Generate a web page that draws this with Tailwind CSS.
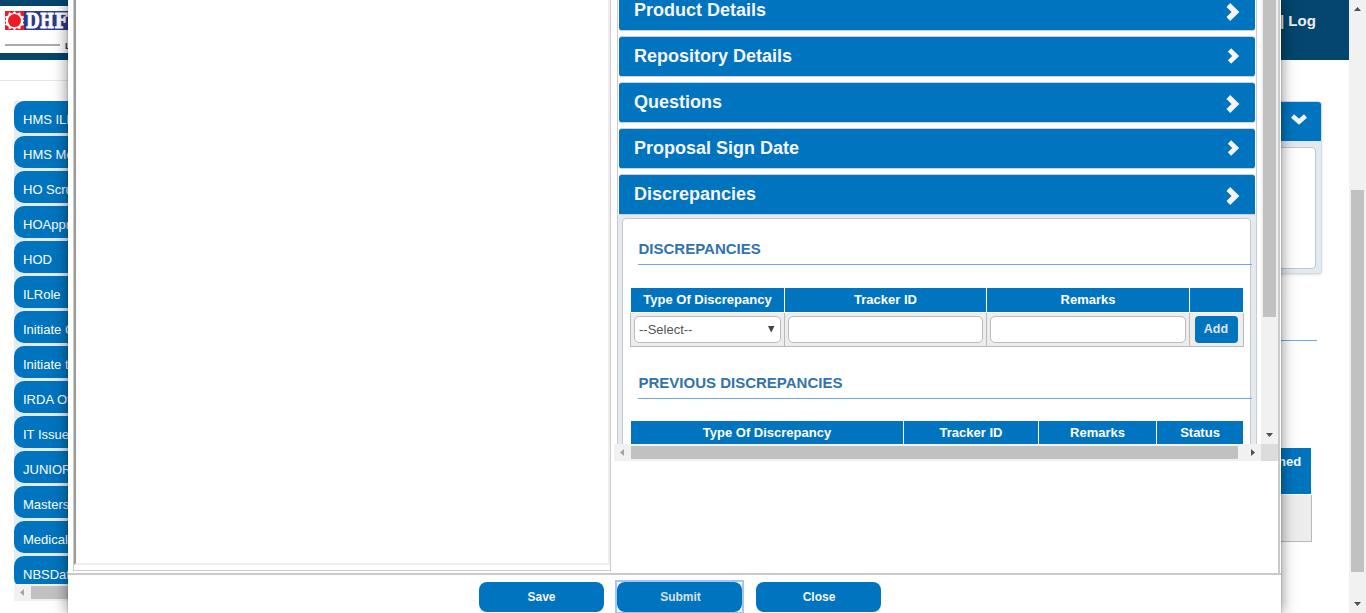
<!DOCTYPE html>
<html lang="en">
<head>
<meta charset="utf-8">
<title>Discrepancies</title>
<script src="https://cdn.jsdelivr.net/npm/@tailwindcss/browser@4"></script>
</head>
<body class="relative h-[613px] w-[1366px] overflow-hidden bg-white font-['Liberation_Sans',Arial,sans-serif]">

<!-- Page behind the dialog -->
<div class="flex h-[613px]">
  <div class="flex w-[1349px] flex-col">
    <header class="flex h-[60px] shrink-0 justify-between bg-[#04466e] pt-[6px]">
      <div class="h-[47px] w-[200px] bg-white pl-[5px] pt-[5px]">
        <svg width="90" height="40" viewBox="0 0 90 40">
          <rect width="19" height="19" fill="#ed1c24"/>
          <path d="M9.500 0l2.200 2.400 3.400-1.200.6 3.400 3.300.8-1.200 2.800 1.200 1.500-1.200 1.700 1.200 2.700-3.300.8-.6 3.400-3.400-1.200-2.200 2.200-2.200-2.200-3.400 1.200-.6-3.400-3.300-.8 1.200-2.700L0 9.700l1.200-1.500L0 5.400l3.300-.8.6-3.400 3.400 1.200z" fill="#fff"/>
          <circle cx="9.500" cy="9.600" r="6.500" fill="#ed1c24"/>
          <rect x="19" width="71" height="19" fill="#2b3a8e"/>
          <g font-family="DejaVu Serif, serif" font-weight="bold" font-size="20.500" fill="#fff" stroke="#fff" stroke-width=".9">
            <text x="21" y="17" textLength="13.500" lengthAdjust="spacingAndGlyphs">D</text>
            <text x="35" y="17" textLength="14" lengthAdjust="spacingAndGlyphs">H</text>
            <text x="49.500" y="17" textLength="13" lengthAdjust="spacingAndGlyphs">F</text>
          </g>
          <rect y="33" width="55" height="2" fill="#aaa"/>
          <text x="60" y="37.500" font-family="Liberation Sans, sans-serif" font-weight="bold" font-size="9" fill="#333">Life</text>
        </svg>
      </div>
      <div class="w-[69px] whitespace-nowrap pt-[5px] text-[15px] font-bold leading-[20px] text-[#eee]">| Log</div>
    </header>
    <div class="h-[21px] w-[1200px] shrink-0 border-b border-[#e7e7e7]"></div>
    <div class="flex justify-between pt-[20px]">
      <nav class="ml-[14px] w-[200px] text-[13px] text-white">
        <div class="flex h-[483px] flex-col gap-[3px] overflow-hidden bg-[#e1ecf4] *:h-8 *:shrink-0 *:rounded-[10px] *:bg-[#0074be] *:pl-[9px] *:leading-[38px]">
          <div>HMS ILRole</div><div>HMS Medical</div><div>HO Scrutiny</div><div>HOApprover</div><div>HOD</div><div>ILRole</div><div>Initiate Claim</div><div>Initiate to</div><div>IRDA Officer</div><div>IT Issue</div><div>JUNIOR</div><div>Masters</div><div>Medical</div><div>NBSData</div>
        </div>
        <div class="flex h-[17px] items-center bg-[#f1f1f1]">
          <svg class="w-[17px]" height="17" viewBox="0 0 17 17"><path d="M10 5v7l-4-3.500z" fill="#a3a3a3"/></svg>
          <div class="h-[13px] flex-1 bg-[#c1c1c1]"></div>
        </div>
      </nav>
      <div class="w-[100px]">
        <div class="h-[173px] w-[73px] rounded-[4px] border border-l-0 border-[#d5dbe0] bg-[#e1e9f1] shadow-sm">
          <div class="flex h-[39px] items-start rounded-tr-[3px] bg-[#0074be] pl-[41px] pt-[11px]">
            <svg width="18" height="12" viewBox="0 0 18 12"><path d="M2.500 3l6.500 5.700 6.500-5.700" fill="none" stroke="#f4f4f4" stroke-width="4.600"/></svg>
          </div>
          <div class="mt-[6px] h-[122px] w-[67px] rounded-r-[4px] border border-[#c4c8cb] bg-white"></div>
        </div>
        <div class="mt-[66px] h-px w-[68px] bg-[#6cabe6]"></div>
        <div class="mt-[107px] h-[46px] w-[62px] bg-[#0074be] pl-[29px] pt-[4px] text-[13px] font-bold leading-[20px] text-white">ned</div>
        <div class="mt-px h-[47px] w-[63px] border-b border-r border-[#b9b9b9] bg-[#ededed]"></div>
      </div>
    </div>
  </div>
  <div class="flex w-[17px] flex-col items-center bg-[#f1f1f1]">
    <svg class="h-[190px] w-[17px]" viewBox="0 0 17 190"><path d="M5 11h7l-3.500-4z" fill="#505050"/></svg>
    <div class="h-[382px] w-[13px] bg-[#c1c1c1]"></div>
    <svg class="h-[41px] w-[17px]" viewBox="0 0 17 41"><path d="M5 30h7l-3.500 4z" fill="#505050"/></svg>
  </div>
</div>

<!-- Dialog -->
<div class="absolute left-[68px] top-0 flex h-[613px] w-[1213px] flex-col bg-white shadow-[0_0_1px_rgba(0,0,0,0.5),0_0_14px_rgba(0,0,0,0.5)]">
  <div class="flex h-[575px] shrink-0 border-b-2 border-[#cacaca]">
    <div class="ml-[5px] h-[571px] w-[538px] border-x border-b border-[#ccc]">
      <div class="h-[565px] w-full border-2 border-t-0 border-b-[#eee] border-l-[#9a9a9a] border-r-[#eee]"></div>
    </div>
    <div class="ml-[3px] h-[461px] w-[664px]">
      <div class="flex h-[444px]">
        <div class="h-[444px] w-[647px] overflow-hidden pl-[3px]">
          <div class="-mt-[10px] flex w-[640px] flex-col">
            <div class="flex flex-col border-x border-[#ccc] text-[18px] font-bold text-[#f5f5f5]">
              <div class="mx-px mb-[5px] flex h-[41px] justify-between rounded-[3px] border-y border-[#cfd2d4] bg-[#0074be] pl-[15px] pr-[15px] pt-[8px] leading-[22px]"><span>Product Details</span><svg class="mt-[4px]" width="14" height="18" viewBox="0 0 14 18"><path d="M2.300 2l7.200 7-7.200 7" fill="none" stroke="#f5f5f5" stroke-width="5.400"/></svg></div>
              <div class="mx-px mb-[5px] flex h-[41px] justify-between rounded-[3px] border-y border-[#cfd2d4] bg-[#0074be] pl-[15px] pr-[15px] pt-[8px] leading-[22px]"><span>Repository Details</span><svg class="mt-[3px]" width="14" height="16" viewBox="0 0 14 16"><path d="M3.500 2l6.200 6-6.200 6" fill="none" stroke="#f5f5f5" stroke-width="4.800"/></svg></div>
              <div class="mx-px mb-[5px] flex h-[41px] justify-between rounded-[3px] border-y border-[#cfd2d4] bg-[#0074be] pl-[15px] pr-[15px] pt-[8px] leading-[22px]"><span>Questions</span><svg class="mt-[4px]" width="14" height="18" viewBox="0 0 14 18"><path d="M2.300 2l7.200 7-7.200 7" fill="none" stroke="#f5f5f5" stroke-width="5.400"/></svg></div>
              <div class="mx-px mb-[5px] flex h-[41px] justify-between rounded-[3px] border-y border-[#cfd2d4] bg-[#0074be] pl-[15px] pr-[15px] pt-[8px] leading-[22px]"><span>Proposal Sign Date</span><svg class="mt-[3px]" width="14" height="16" viewBox="0 0 14 16"><path d="M3.500 2l6.200 6-6.200 6" fill="none" stroke="#f5f5f5" stroke-width="4.800"/></svg></div>
              <div class="mx-px flex h-[41px] justify-between rounded-t-[3px] border-y border-[#cfd2d4] bg-[#0074be] pl-[15px] pr-[15px] pt-[8px] leading-[22px]"><span>Discrepancies</span><svg class="mt-[4px]" width="14" height="18" viewBox="0 0 14 18"><path d="M2.300 2l7.200 7-7.200 7" fill="none" stroke="#f5f5f5" stroke-width="5.400"/></svg></div>
            </div>
            <div class="h-[240px] border-x border-[#ccc] bg-[#e3eaf1] pl-[4px] pt-[3px]">
              <div class="h-[240px] w-[629px] rounded-t-[4px] border border-[#c5c7c9] bg-white pl-[7px] pt-[19px]">
                <h2 class="ml-[8px] h-[27px] w-[614px] border-b border-[#6cabe6] pl-[0.5px] text-[15px] font-bold leading-[22px] text-[#3273ac]">DISCREPANCIES</h2>
                <div class="ml-px mt-[23px] grid h-[24px] w-[612px] grid-cols-[153px_201px_202px_1fr] gap-x-px text-center text-[13px] font-bold leading-[23px] text-white *:bg-[#0074be]">
                  <div>Type Of Discrepancy</div><div>Tracker ID</div><div>Remarks</div><div></div>
                </div>
                <div class="mt-px grid h-[34px] w-[614px] grid-cols-[154px_202px_203px_1fr] border-b border-l border-[#bbb] bg-[#ededed] *:border-r *:border-[#bbb] *:px-[3px] *:pt-[3px]">
                  <div><div class="flex h-[27px] w-[147px] items-center justify-between rounded-[5px] border border-[#bbb] bg-white pl-[4px] pr-[5px] text-[13px] text-[#555]">--Select--<svg class="-mt-[2px]" width="8" height="8" viewBox="0 0 8 8"><path d="M1 1h6.500L4.200 7.500z" fill="#444"/></svg></div></div>
                  <div><div class="h-[27px] w-[195px] rounded-[5px] border border-[#bbb] bg-white"></div></div>
                  <div><div class="h-[27px] w-[196px] rounded-[5px] border border-[#bbb] bg-white"></div></div>
                  <div><div class="ml-[2px] h-[27px] w-[43px] rounded-[4px] bg-[#0074be] pr-px text-center text-[12.500px] font-bold leading-[26px] text-[#e2e2e2]">Add</div></div>
                </div>
                <h2 class="ml-[8px] mt-[25px] h-[27px] w-[614px] border-b border-[#6cabe6] pl-[0.5px] text-[15px] font-bold leading-[22px] text-[#3273ac]">PREVIOUS DISCREPANCIES</h2>
                <div class="ml-px mt-[22px] grid h-[24px] w-[612px] grid-cols-[272px_134px_117px_1fr] gap-x-px text-center text-[13px] font-bold leading-[23px] text-white *:bg-[#0074be]">
                  <div>Type Of Discrepancy</div><div>Tracker ID</div><div>Remarks</div><div>Status</div>
                </div>
              </div>
            </div>
          </div>
        </div>
        <div class="flex w-[17px] flex-col items-center bg-[#f1f1f1]">
          <div class="h-[317px] w-[13px] bg-[#c1c1c1]"></div>
          <svg width="17" height="127" viewBox="0 0 17 127"><path d="M5 116h7l-3.500 4z" fill="#505050"/></svg>
        </div>
      </div>
      <div class="flex h-[17px] items-center bg-[#f1f1f1]">
        <svg width="17" height="17" viewBox="0 0 17 17"><path d="M10 5v7l-4-3.500z" fill="#a3a3a3"/></svg>
        <div class="h-[13px] w-[607px] bg-[#c1c1c1]"></div>
        <svg width="23" height="17" viewBox="0 0 23 17"><path d="M13 5v7l4-3.500z" fill="#505050"/></svg>
        <div class="h-[17px] w-[17px] bg-[#dcdcdc]"></div>
      </div>
    </div>
    <div class="w-[2px] bg-[#cacaca]"></div>
  </div>
  <div class="ml-[411px] mt-[7px] flex text-center text-[12px] font-bold leading-[30px] text-[#f5f5f5] *:h-[30px] *:w-[125px] *:rounded-[8px] *:bg-[#0074be]">
    <div>Save</div>
    <div class="relative ml-[13px] pl-[2px] text-[#d8e0e6]">Submit<div class="absolute -inset-x-[2px] -top-[2px] -bottom-[2px] border-2 border-[#a3c4fb]"></div></div>
    <div class="ml-[14px] pl-px">Close</div>
  </div>
</div>
</body>
</html>
